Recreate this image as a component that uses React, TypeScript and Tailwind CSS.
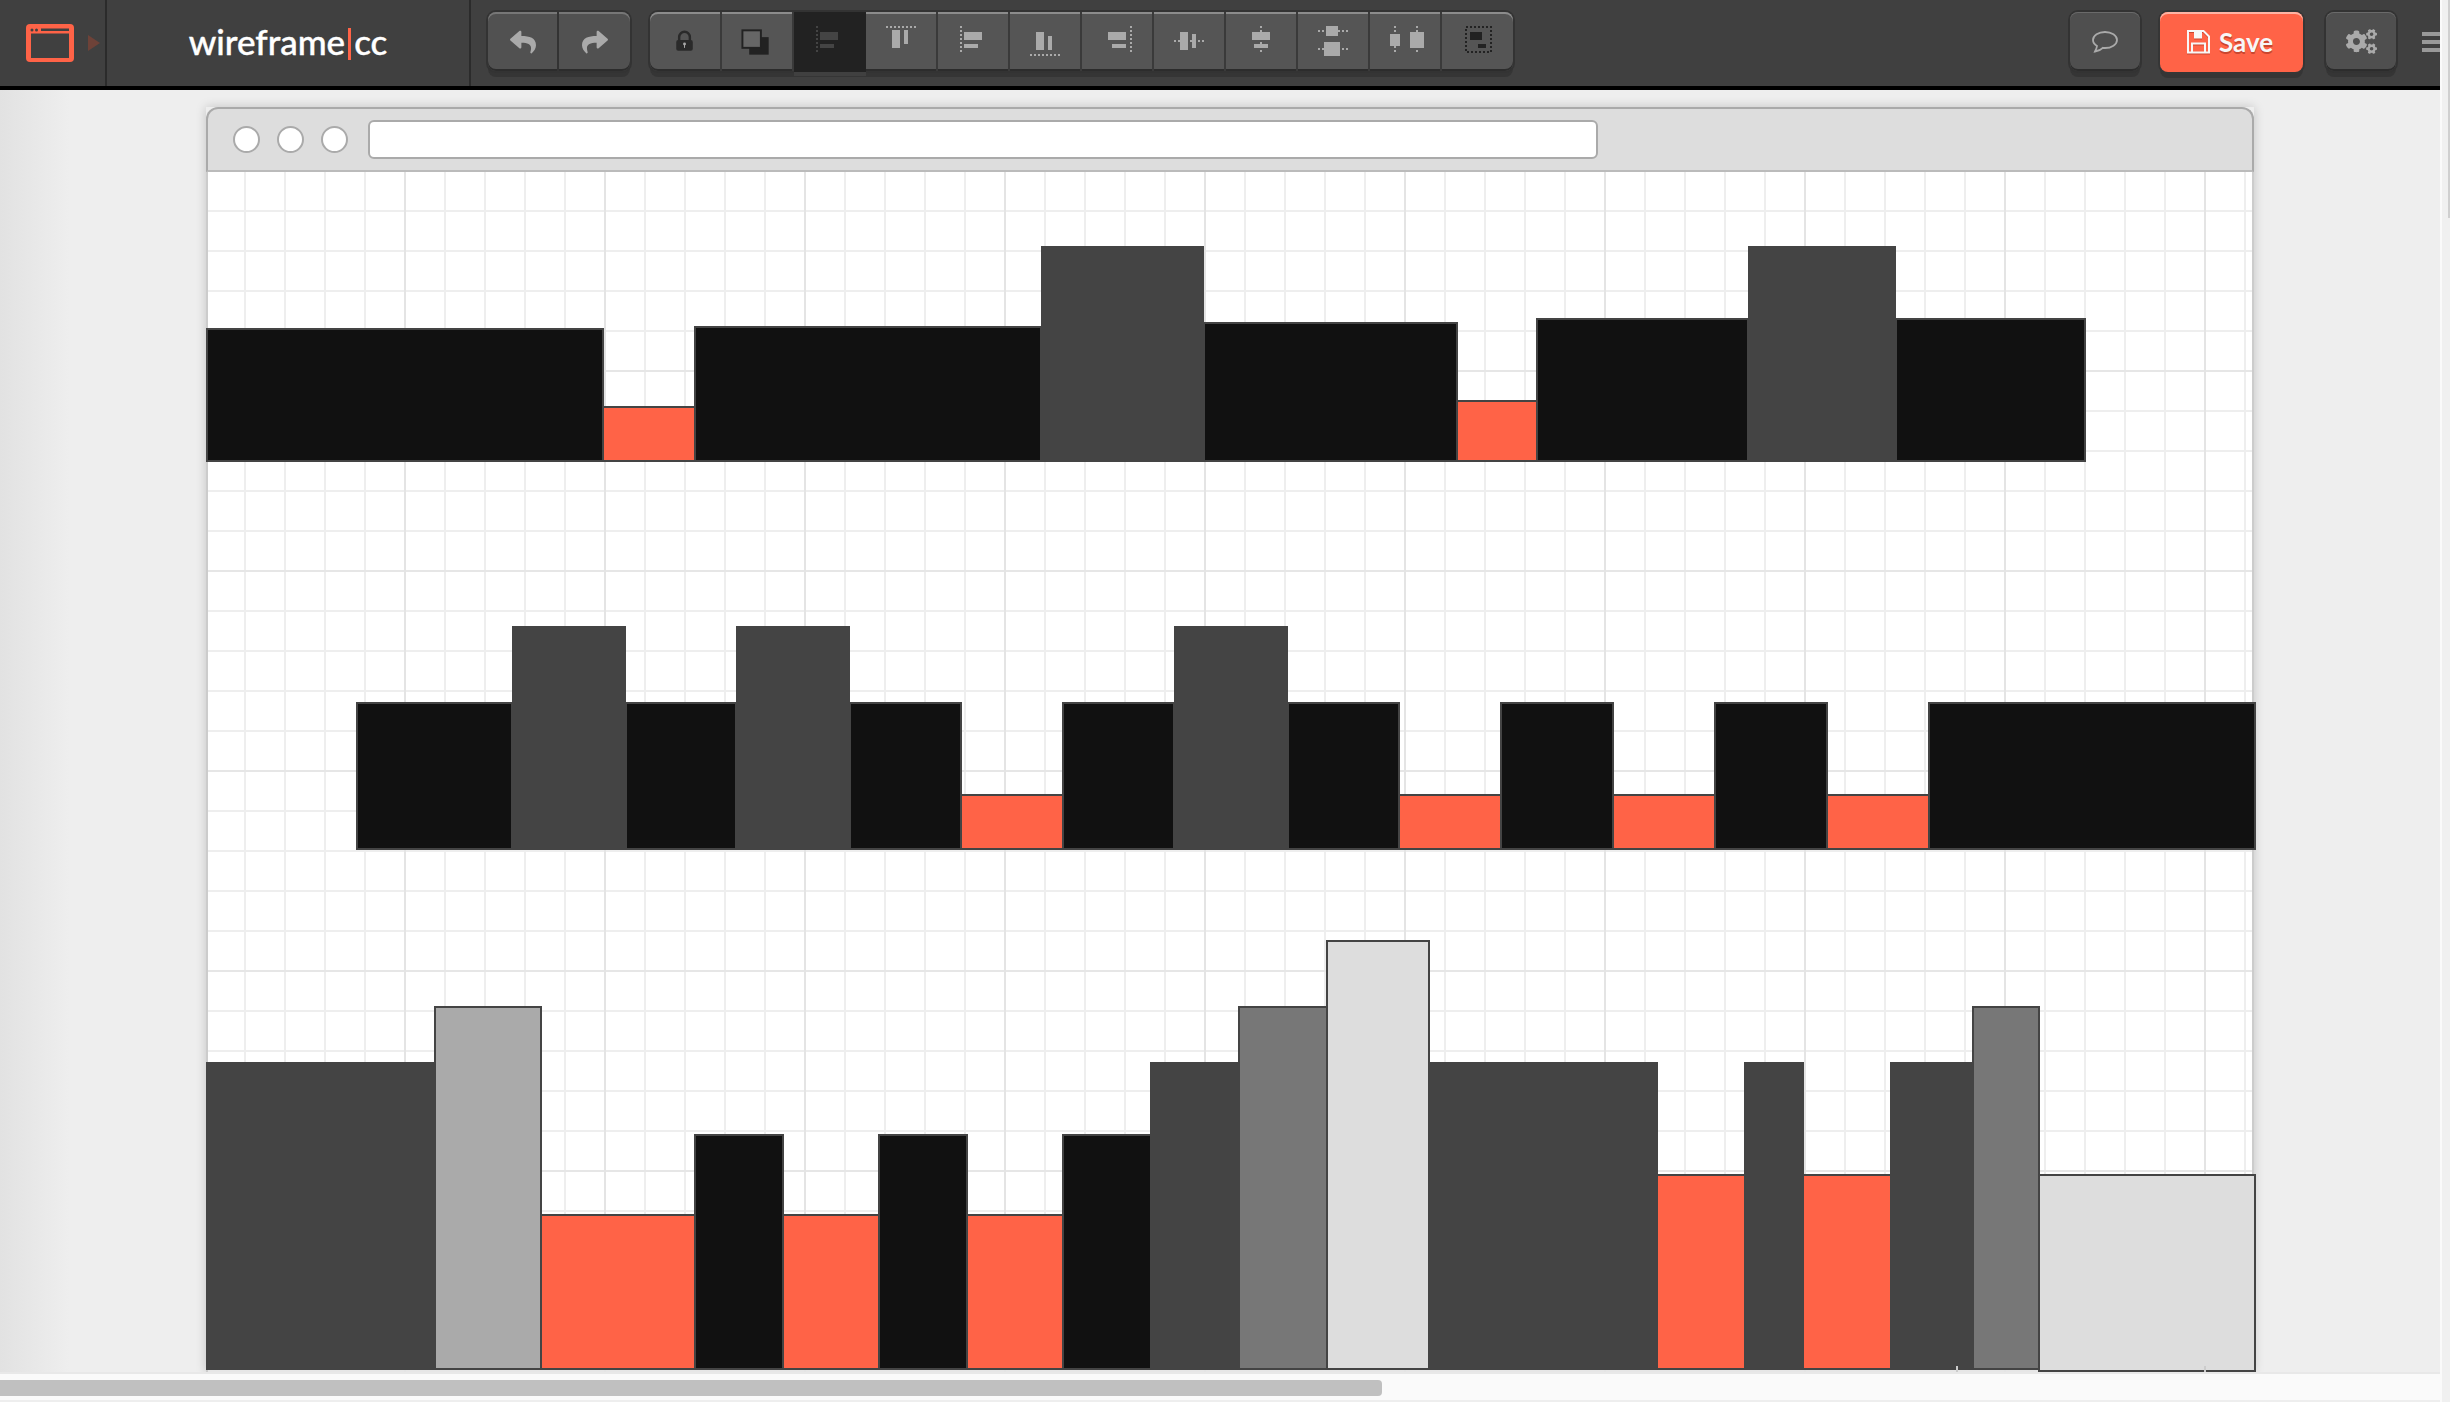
import { FaCogs, FaReply, FaShare } from "react-icons/fa";

// Shapes on the wireframe canvas, in page coordinates: [left, right, top, bottom, colour]
const BLACK = "#111111";
const DARK = "#444444";
const ORANGE = "#ff6347";

const shapes: [number, number, number, number, string][] = [
  [207, 603, 328, 462, BLACK],
  [603, 695, 406, 462, ORANGE],
  [695, 1041, 326, 462, BLACK],
  [1204, 1457, 322, 462, BLACK],
  [1042, 1203, 246, 462, DARK],
  [1457, 1537, 400, 462, ORANGE],
  [1537, 1748, 318, 462, BLACK],
  [1896, 2085, 318, 462, BLACK],
  [1749, 1895, 246, 462, DARK],

  [357, 512, 702, 850, BLACK],
  [626, 736, 702, 850, BLACK],
  [850, 961, 702, 850, BLACK],
  [513, 625, 626, 850, DARK],
  [737, 849, 626, 850, DARK],
  [961, 1063, 794, 850, ORANGE],
  [1063, 1174, 702, 850, BLACK],
  [1288, 1399, 702, 850, BLACK],
  [1175, 1287, 626, 850, DARK],
  [1399, 1501, 794, 850, ORANGE],
  [1501, 1613, 702, 850, BLACK],
  [1613, 1715, 794, 850, ORANGE],
  [1715, 1827, 702, 850, BLACK],
  [1827, 1929, 794, 850, ORANGE],
  [1929, 2255, 702, 850, BLACK],

  [207, 435, 1062, 1370, DARK],
  [435, 541, 1006, 1370, "#aaaaaa"],
  [541, 695, 1214, 1370, ORANGE],
  [695, 783, 1134, 1370, BLACK],
  [783, 879, 1214, 1370, ORANGE],
  [879, 967, 1134, 1370, BLACK],
  [967, 1063, 1214, 1370, ORANGE],
  [1063, 1151, 1134, 1370, BLACK],
  [1151, 1239, 1062, 1370, DARK],
  [1239, 1327, 1006, 1370, "#777777"],
  [1327, 1429, 940, 1370, "#dddddd"],
  [1429, 1657, 1062, 1370, DARK],
  [1657, 1745, 1174, 1370, ORANGE],
  [1745, 1803, 1062, 1370, DARK],
  [1803, 1891, 1174, 1370, ORANGE],
  [1891, 1973, 1062, 1370, DARK],
  [1973, 2039, 1006, 1370, "#777777"],
  [2039, 2255, 1174, 1372, "#dddddd"],
];

type Bar = [number, number, number, number];
type AlignIcon = { bars: Bar[]; v?: number[]; h?: number[]; active?: boolean };

const alignIcons: AlignIcon[] = [
  { v: [23], bars: [[26, 20, 18, 8], [26, 32, 14, 4]], active: true },
  { h: [15], bars: [[26, 18, 8, 18], [38, 18, 4, 14]] },
  { v: [23], bars: [[26, 20, 18, 8], [26, 32, 14, 4]] },
  { h: [43], bars: [[26, 20, 8, 18], [38, 24, 4, 14]] },
  { v: [49], bars: [[26, 20, 18, 8], [30, 32, 14, 4]] },
  { h: [29], bars: [[26, 20, 8, 18], [38, 22, 4, 14]] },
  { v: [35], bars: [[26, 20, 18, 8], [28, 32, 14, 4]] },
  { h: [19, 37], bars: [[28, 14, 12, 10], [26, 30, 16, 14]] },
  { v: [25, 47], bars: [[20, 22, 10, 12], [40, 20, 14, 16]] },
];

function AlignGlyph({ icon }: { icon: AlignIcon }) {
  const color = icon.active ? "#444444" : "#aaaaaa";
  return (
    <svg width="72" height="58" viewBox="0 0 72 58">
      {icon.v?.map((x) => (
        <line key={x} x1={x} x2={x} y1="14" y2="42" stroke={color} strokeWidth="2" strokeDasharray="2 2" />
      ))}
      {icon.h?.map((y) => (
        <line key={y} x1="20" x2="50" y1={y} y2={y} stroke={color} strokeWidth="2" strokeDasharray="2 2" />
      ))}
      {icon.bars.map(([x, y, w, h]) => (
        <rect key={`${x}-${y}`} x={x} y={y} width={w} height={h} fill={color} />
      ))}
    </svg>
  );
}

function Logo() {
  return (
    <svg width="48" height="38" viewBox="0 0 48 38">
      <rect width="48" height="38" rx="4" fill="#ff6347" />
      <rect x="5" y="9.5" width="38" height="24.5" fill="#404040" />
      <circle cx="6" cy="6" r="1.5" fill="#404040" />
      <circle cx="10.5" cy="6" r="1.5" fill="#404040" />
      <rect x="15" y="4.5" width="28" height="2.5" fill="#404040" />
    </svg>
  );
}

function Toolbar() {
  return (
    <div className="ml-[20px] mt-[12px] flex h-[59px] w-[863px] self-start rounded-[8px] bg-[#555555] shadow-[inset_0_2px_0_#8c8c8c,inset_0_-2px_0_#2c2c2c,0_0_0_2px_#333333,0_6px_0_#353535]">
      <div className="flex h-full w-[72px] items-center justify-center border-r-2 border-[#3a3a3a]">
        <svg width="72" height="58" viewBox="0 0 72 58">
          <path d="M30 28v-4a5.5 5.5 0 0 1 11 0v4" fill="none" stroke="#2a2a2a" strokeWidth="2.5" />
          <rect x="27" y="27" width="17" height="11" rx="2" fill="#2a2a2a" />
          <circle cx="35.5" cy="31" r="1.5" fill="#aaaaaa" />
          <rect x="35" y="31" width="1" height="4" fill="#aaaaaa" />
        </svg>
      </div>
      <div className="flex h-full w-[72px] items-center justify-center border-r-2 border-[#3a3a3a]">
        <svg width="72" height="58" viewBox="0 0 72 58">
          <rect x="28" y="24" width="20" height="18" fill="#222222" />
          <rect x="21" y="17" width="19" height="18" fill="#666666" stroke="#222222" strokeWidth="2" />
        </svg>
      </div>
      {alignIcons.map((icon, idx) => (
        <div
          key={idx}
          className={
            icon.active
              ? "relative z-10 h-[60px] w-[72px] bg-[#222222] shadow-[0_4px_0_#404040]"
              : "h-full w-[72px] border-r-2 border-[#3a3a3a]"
          }
        >
          <AlignGlyph icon={icon} />
        </div>
      ))}
      <div className="h-full w-[71px]">
        <svg width="72" height="58" viewBox="0 0 72 58">
          <rect x="24" y="15" width="25" height="25" fill="none" stroke="#222222" strokeWidth="2" strokeDasharray="2 2" />
          <rect x="28" y="20" width="12" height="8" fill="#222222" />
          <rect x="36" y="32" width="8" height="4" fill="#222222" />
        </svg>
      </div>
    </div>
  );
}

function Header() {
  return (
    <header className="flex h-[90px] w-full items-start border-b-4 border-black bg-[#404040]">
      <div className="flex h-full w-[107px] items-center gap-[14px] border-r-2 border-[#2b2b2b] pl-[26px]">
        <Logo />
        <svg width="12" height="16" viewBox="0 0 12 16">
          <path d="M0 0l12 8-12 8z" fill="#6e4238" />
        </svg>
      </div>
      <div className="flex h-full w-[364px] items-center justify-center border-r-2 border-[#2b2b2b] pb-[4px] text-[35px] font-medium text-white [font-family:Lato,sans-serif] [-webkit-text-stroke:0.4px_white]">
        wireframe
        <span className="mx-[3px] h-[32px] w-[3px] translate-y-[3px] bg-[#ff6347]" />
        cc
      </div>

      <div className="ml-[17px] mt-[12px] flex h-[59px] w-[142px] rounded-[8px] bg-[#515151] text-[#aaaaaa] shadow-[inset_0_2px_0_#777777,inset_0_-2px_0_#2c2c2c,0_0_0_2px_#333333,0_6px_0_#353535]">
        <div className="flex w-[71px] items-center justify-center border-r-2 border-[#333333]">
          <FaReply size={26} />
        </div>
        <div className="flex w-[71px] items-center justify-center">
          <FaShare size={26} />
        </div>
      </div>

      <Toolbar />

      <div className="flex-1" />

      <div className="mt-[12px] flex h-[59px] w-[70px] items-center justify-center rounded-[8px] bg-[#4f4f4f] shadow-[inset_0_1px_0_#6a6a6a,inset_0_-2px_0_#2c2c2c,0_0_0_2px_#333333,0_6px_0_#353535]">
        <svg width="28" height="24" viewBox="0 0 28 24">
          <path
            d="M14 2C7.4 2 2 5.6 2 10c0 2.4 1.6 4.5 4 6-.2 2-1.200 3.800-2 5.500 2.800-.4 6-1.800 7.800-3.700.700.100 1.500.200 2.200.200 6.600 0 12-3.600 12-8S20.600 2 14 2z"
            fill="none"
            stroke="#aaaaaa"
            strokeWidth="1.800"
          />
        </svg>
      </div>

      <div className="ml-[20px] mt-[12px] flex h-[60px] w-[143px] items-center gap-[9px] rounded-[8px] bg-[#ff6347] pl-[27px] text-[26px] font-bold text-[#f7f7f7] shadow-[inset_0_2px_0_#ffb3a3,0_0_0_2px_#363636,0_6px_0_#353535] [font-family:Lato,sans-serif] [text-shadow:0_2px_0_#c9462f]">
        <svg width="23" height="24" viewBox="0 0 23 24" className="drop-shadow-[0_1px_0_#c9462f]">
          <path d="M1 1h15.500l5.500 5.500V22.500H1z" fill="none" stroke="#f7f7f7" strokeWidth="2" />
          <rect x="7" y="1" width="8" height="7.500" fill="#f7f7f7" />
          <path d="M5 22.500V13.500h13v9" fill="none" stroke="#f7f7f7" strokeWidth="2" />
        </svg>
        Save
      </div>

      <div className="ml-[23px] mt-[12px] flex h-[59px] w-[70px] items-center justify-center rounded-[8px] bg-[#4f4f4f] text-[#aaaaaa] shadow-[inset_0_1px_0_#6a6a6a,inset_0_-2px_0_#2c2c2c,0_0_0_2px_#333333,0_6px_0_#353535]">
        <FaCogs size={31} />
      </div>

      <div className="ml-[26px] mt-[32px] flex w-[18px] flex-col gap-[4px]">
        <div className="h-[4px] bg-[#999999]" />
        <div className="h-[4px] bg-[#999999]" />
        <div className="h-[4px] bg-[#999999]" />
      </div>
    </header>
  );
}

function BrowserWindow() {
  return (
    <div className="w-[2048px] shadow-[0_0_10px_rgba(0,0,0,0.18)]">
      <div className="flex h-[65px] items-center rounded-t-[12px] border-x-2 border-t-2 border-b-2 border-x-[#aaaaaa] border-t-[#aaaaaa] border-b-[#bbbbbb] bg-[#dddddd] pl-[25px]">
        <div className="h-[27px] w-[27px] rounded-full border-2 border-[#aaaaaa] bg-white" />
        <div className="ml-[17px] h-[27px] w-[27px] rounded-full border-2 border-[#aaaaaa] bg-white" />
        <div className="ml-[17px] h-[27px] w-[27px] rounded-full border-2 border-[#aaaaaa] bg-white" />
        <div className="ml-[20px] h-[39px] w-[1230px] rounded-[6px] border-2 border-[#aaaaaa] bg-white" />
      </div>

      <div className="relative h-[1200px] border-x-2 border-[#cccccc] bg-white bg-[linear-gradient(90deg,#e4e4e4_2px,transparent_2px),linear-gradient(#e6e6e6_2px,transparent_2px),linear-gradient(90deg,#eeeeee_2px,transparent_2px),linear-gradient(#eeeeee_2px,transparent_2px)] bg-[size:200px_200px,200px_200px,40px_40px,40px_40px] bg-[position:196px_0,0_198px,36px_0,0_38px]">
        {shapes.map(([left, right, top, bottom, color], idx) => (
          <div
            key={idx}
            className="absolute border-2 border-[#444444]"
            style={{
              left: left - 1 - 208,
              top: top - 172,
              width: right - left + 2,
              height: bottom - top,
              backgroundColor: color,
            }}
          />
        ))}
        <div className="absolute left-[1748px] top-[1194px] h-[6px] w-[2px] bg-[#cccccc]" />
        <div className="absolute left-[1996px] top-[1194px] h-[6px] w-[2px] bg-[#cccccc]" />
      </div>
    </div>
  );
}

export default function App() {
  return (
    <div className="flex h-[1402px] w-[2450px] overflow-hidden bg-[#eeeeee]">
      <div className="flex w-[2440px] flex-col">
        <Header />
        <main className="h-[1282px] bg-[linear-gradient(90deg,#e2e2e2,#eeeeee_70px)] pl-[206px] pt-[17px]">
          <BrowserWindow />
        </main>
        <div className="h-[28px] border-t-2 border-[#e8e8e8] bg-[#fafafa] pt-[6px]">
          <div className="h-[16px] w-[1382px] rounded-r-[4px] bg-[#c0c0c0]" />
        </div>
      </div>
      <div className="flex h-full w-[10px] justify-end border-l-2 border-[#fafafa] bg-[#f0f0f0]">
        <div className="h-[218px] w-[2px] bg-[#cfcfcf]" />
      </div>
    </div>
  );
}
